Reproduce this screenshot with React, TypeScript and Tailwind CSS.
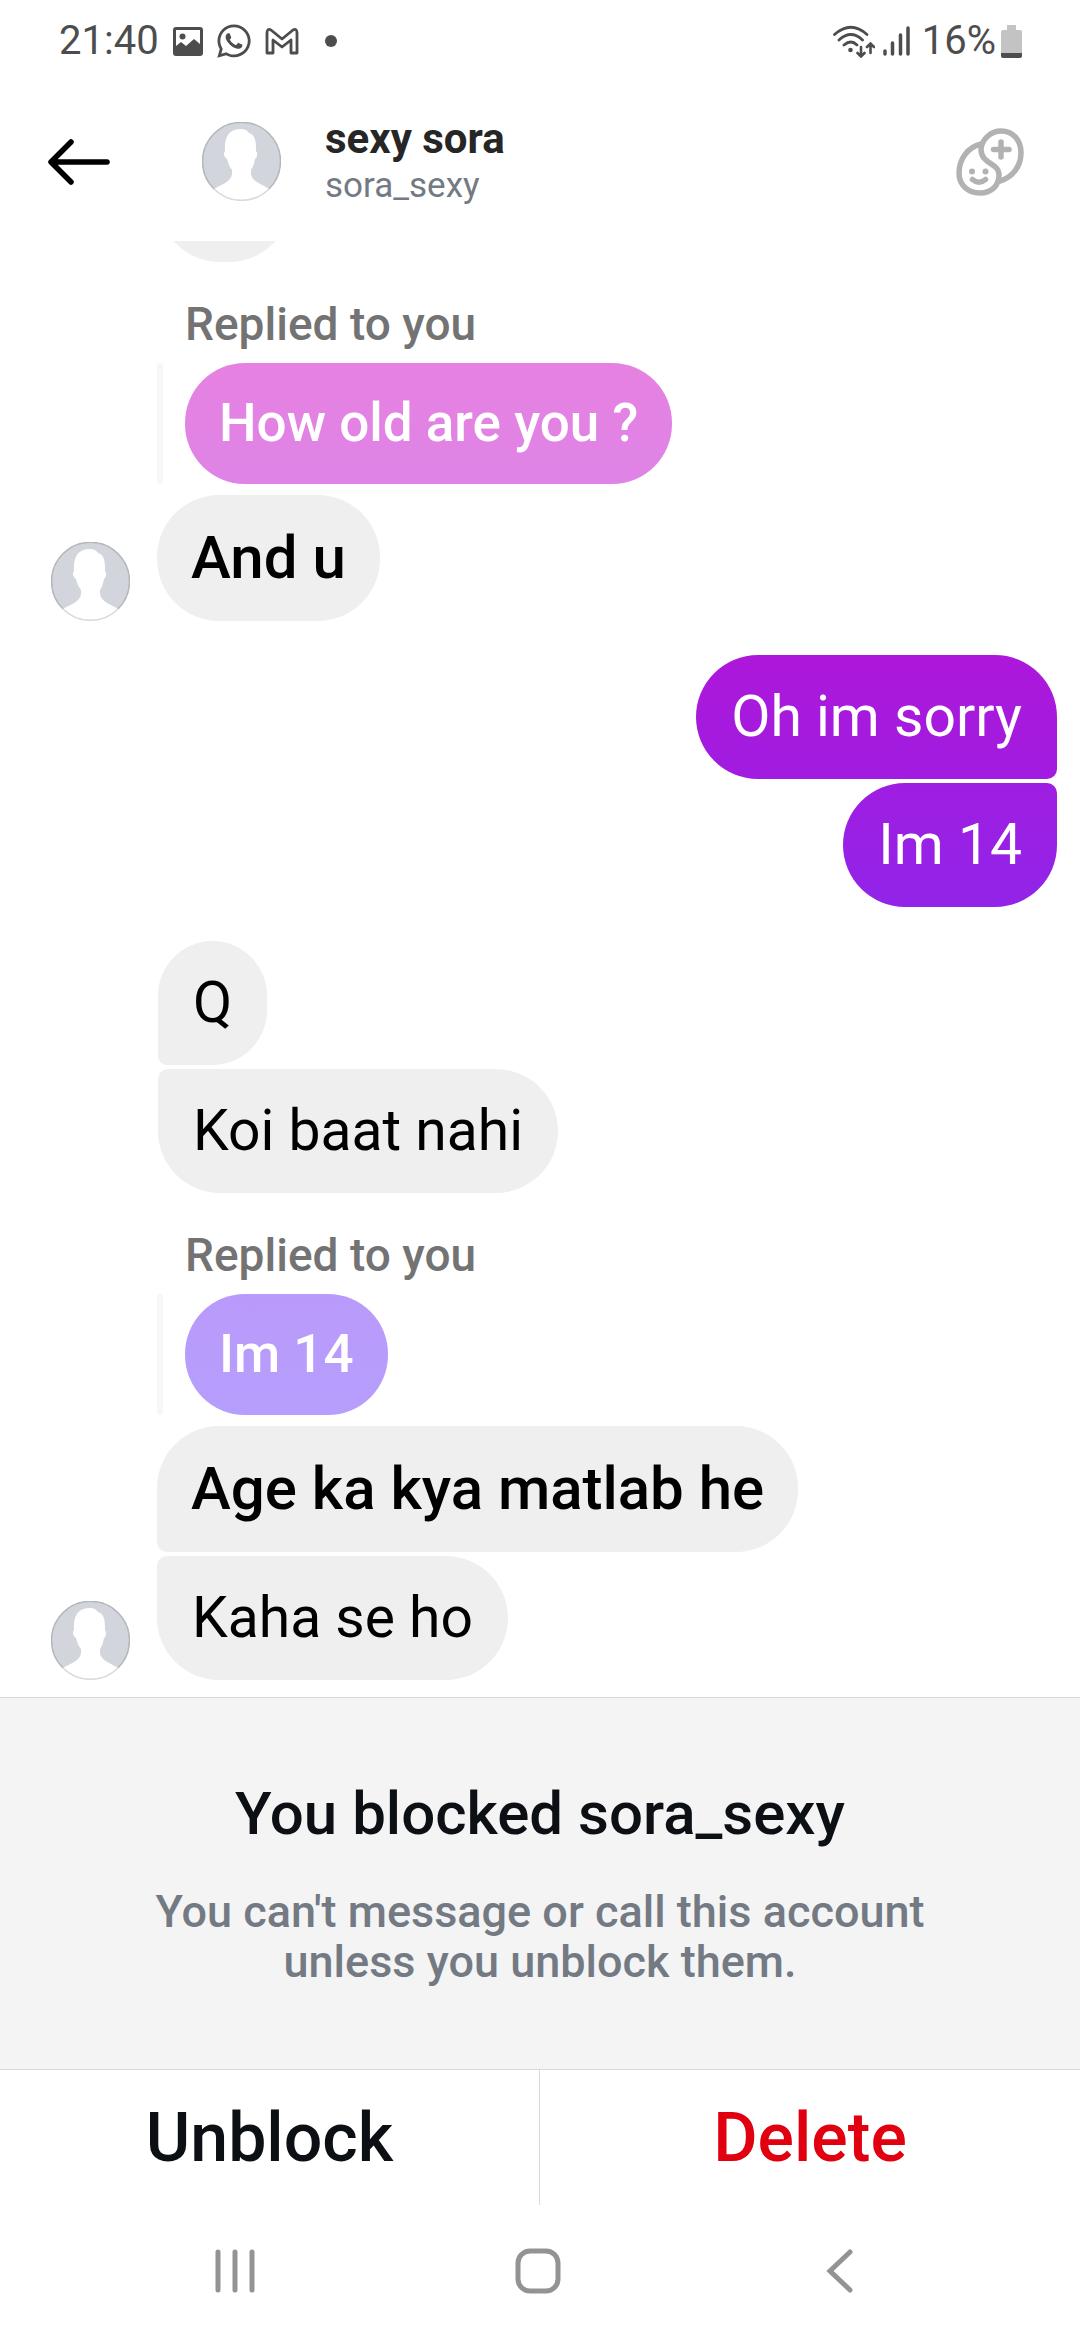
import React from "react";
import { FaWhatsapp } from "react-icons/fa";

type MessageProps = {
  children: React.ReactNode;
  className?: string;
};

const Avatar: React.FC = () => (
  <svg viewBox="0 0 79 79" className="size-[79px] shrink-0" aria-hidden="true">
    <defs>
      <clipPath id="avatar-clip">
        <circle cx="39.5" cy="39.5" r="39" />
      </clipPath>
    </defs>
    <g clipPath="url(#avatar-clip)">
      <rect width="79" height="79" fill="#d2d5dc" />
      <path
        d="M-2 79 L12 67 C20 62 29 60 30 52 L30 48 C27 44 26 41 25 37 C22 35 21 31 23 29 C22 15 27 7 39 7 C43 7 46 9 47 11 C54 13 54 21 54 29 C56 31 55 36 53 37 C52 42 51 45 49 48 L49 52 C50 60 60 62 67 67 L81 79 Z"
        fill="#fff"
      />
    </g>
    <path d="M12 67 A39 39 0 1 1 67 67" fill="none" stroke="#b3b6ba" strokeWidth="1.5" />
    <path d="M12 67 A39 39 0 0 0 67 67" fill="none" stroke="#dadada" strokeWidth="1.5" />
  </svg>
);

const ReplyLabel: React.FC = () => (
  <p className="mt-9 mb-3 pl-[185px] text-[46px] leading-[53px] font-medium text-[#737373]">
    Replied to you
  </p>
);

const Quoted: React.FC<MessageProps> = ({ children, className }) => (
  <div className="mb-[11px] flex gap-[22px] pl-[157px]">
    <span className="w-[6px] rounded-full bg-[#f5f7f9]" />
    <p
      className={`rounded-[60px] bg-linear-to-b px-[34px] py-[30px] text-[53px] leading-[61px] font-medium text-white ${className}`}
    >
      {children}
    </p>
  </div>
);

const Reply: React.FC<MessageProps> = ({ children, className }) => (
  <p
    className={`w-fit bg-[#efefef] px-[34px] py-[30px] text-[60px] leading-[66px] font-medium text-black ${className}`}
  >
    {children}
  </p>
);

const Received: React.FC<MessageProps> = ({ children, className }) => (
  <p
    className={`w-fit bg-[#efefef] px-[35px] py-[30px] text-[57px] leading-[64px] text-black ${className}`}
  >
    {children}
  </p>
);

const Sent: React.FC<MessageProps> = ({ children, className }) => (
  <p
    className={`w-fit bg-linear-to-b px-[35px] py-[30px] text-[57px] leading-[64px] text-white ${className}`}
  >
    {children}
  </p>
);

const StatusBar: React.FC = () => (
  <div className="flex h-[82px] items-center justify-between pr-[58px] pl-[59px] text-[#4d4d4d]">
    <div className="flex items-center">
      <span className="text-[40px] leading-[48px]">21:40</span>
      <svg viewBox="0 0 30 29" className="ml-[14px] h-[29px] w-[30px]">
        <path
          fillRule="evenodd"
          d="M3 0H27Q30 0 30 3V26Q30 29 27 29H3Q0 29 0 26V3Q0 0 3 0ZM3 3V19L8 15L13 19L21 12L27 17V3Z"
          fill="currentColor"
        />
        <circle cx="9.500" cy="9.500" r="3" fill="currentColor" />
      </svg>
      <FaWhatsapp className="ml-3 size-[38px]" />
      <svg viewBox="0 0 34 27" className="ml-3 h-[27px] w-[34px]" fill="none">
        <path
          d="M2 25V5Q2 0 6 2L17 11L28 2Q32 0 32 5V25H26V12L17 19L8 12V25Z"
          stroke="currentColor"
          strokeWidth="2.800"
          strokeLinejoin="round"
        />
      </svg>
      <span className="ml-[26px] size-3 rounded-full bg-[#4d4d4d]" />
    </div>
    <div className="flex items-center">
      <svg viewBox="0 0 42 33" className="h-[33px] w-[42px]" fill="none" stroke="currentColor" strokeLinecap="round">
        <path d="M1.500 9.500Q18 -5 34 9.500M6 15Q18 4 29.500 15M11 20Q18 14 24 20" strokeWidth="2.800" />
        <circle cx="17.500" cy="25" r="2.300" fill="currentColor" stroke="none" />
        <path d="M28 22V31M24.500 28L28 31.500L31.500 28M37.500 28V19M34 22L37.500 18.500L41 22" strokeWidth="2.600" />
      </svg>
      <svg viewBox="0 0 27 30" className="ml-2 h-[30px] w-[27px]" stroke="currentColor" strokeWidth="3.5" strokeLinecap="round">
        <path d="M2 25V28M9.500 17V28M17.500 9V28M25 2V28" />
      </svg>
      <span className="ml-3 text-[40px] leading-[48px]">16%</span>
      <svg viewBox="0 0 21 33" className="ml-[5px] h-[33px] w-[21px]">
        <path d="M6 0H15V5H19Q21 5 21 7V28H0V7Q0 5 2 5H6Z" fill="#c3c3c3" />
        <path d="M0 28H21V31Q21 33 19 33H2Q0 33 0 31Z" fill="#4d4d4d" />
      </svg>
    </div>
  </div>
);

const Header: React.FC = () => (
  <header className="flex h-[159px] items-center pr-[56px] pl-[47px]">
    <button type="button" aria-label="Back" className="flex h-[79px] w-[155px] items-center">
      <svg viewBox="0 0 64 48" className="h-12 w-16" fill="none" stroke="#000" strokeWidth="5.500" strokeLinecap="round">
        <path d="M24 4L4 24L24 44M5 24H60" strokeLinejoin="round" />
      </svg>
    </button>
    <Avatar />
    <div className="ml-11 flex-1">
      <h1 className="text-[42px] leading-[48px] font-bold text-[#262626]">sexy sora</h1>
      <p className="text-[35px] leading-[46px] text-[#737a83]">sora_sexy</p>
    </div>
    <button type="button" aria-label="Chat theme">
      <svg viewBox="0 0 68 68" className="size-[68px]" fill="none" stroke="#b2b2b2" strokeWidth="5.500" strokeLinecap="round">
        <path d="M25 16C12 19 3 31 3 45C3 57 12 65 24 65C36 65 43 57 43 47C43 34 25 37 25 21C26 11 35 3 45 3C57 3 65 12 65 25C65 38 57 49 44 53" strokeLinejoin="round" />
        <path d="M45 14V29M37.500 21.500H53" />
        <path d="M16.500 51.500Q23 57 29.500 51.500" />
        <circle cx="16" cy="43.500" r="3" fill="#b2b2b2" stroke="none" />
        <circle cx="29.500" cy="43.500" r="3" fill="#b2b2b2" stroke="none" />
      </svg>
    </button>
  </header>
);

const NavBar: React.FC = () => (
  <nav className="flex h-[135px] items-center justify-between pr-[216px] pb-1 pl-[211px] text-[#939393]">
    <button type="button" aria-label="Recent apps">
      <svg viewBox="0 0 48 48" className="size-12" stroke="currentColor" strokeWidth="5" strokeLinecap="round">
        <path d="M7 5V43M24 5V43M41 5V43" />
      </svg>
    </button>
    <button type="button" aria-label="Home">
      <svg viewBox="0 0 48 48" className="size-12" fill="none" stroke="currentColor" strokeWidth="5">
        <rect x="4" y="4" width="40" height="40" rx="12" />
      </svg>
    </button>
    <button type="button" aria-label="Go back">
      <svg viewBox="0 0 48 48" className="size-12" fill="none" stroke="currentColor" strokeWidth="5" strokeLinecap="round">
        <path d="M34 5L14 24L34 43" />
      </svg>
    </button>
  </nav>
);

const App: React.FC = () => {
  return (
    <div className="w-full bg-white font-['Roboto','Liberation_Sans',sans-serif]">
      <StatusBar />
      <Header />

      <main className="pb-[17px]">
        {/* tail of an earlier message, cut off by the header */}
        <div className="flex h-[21px] items-end overflow-hidden pl-[158px]">
          <span className="h-[124px] w-[133px] shrink-0 rounded-[62px] bg-[#efefef]" />
        </div>

        <ReplyLabel />
        <Quoted className="from-[#e681e1] to-[#de84e6]">How old are you ?</Quoted>
        <div className="flex items-end gap-[27px] pl-[51px]">
          <Avatar />
          <Reply className="rounded-[62px]">And u</Reply>
        </div>

        <div className="mt-[34px] flex flex-col items-end gap-1 pr-[23px]">
          <Sent className="rounded-[62px] rounded-br-[10px] from-[#ad17da] to-[#a01ce0]">
            Oh im sorry
          </Sent>
          <Sent className="rounded-[62px] rounded-tr-[10px] from-[#9f1de1] to-[#9124e8]">
            Im 14
          </Sent>
        </div>

        <div className="mt-[34px] flex flex-col gap-1 pl-[158px]">
          <Received className="rounded-[62px] rounded-bl-[10px]">Q</Received>
          <Received className="rounded-[62px] rounded-tl-[10px]">Koi baat nahi</Received>
        </div>

        <ReplyLabel />
        <Quoted className="from-[#b99afb] to-[#b69efd]">Im 14</Quoted>
        <div className="flex items-end gap-[27px] pl-[51px]">
          <Avatar />
          <div className="flex flex-col gap-1">
            <Reply className="rounded-[62px] rounded-bl-[10px]">Age ka kya matlab he</Reply>
            <Received className="rounded-[62px] rounded-tl-[10px]">Kaha se ho</Received>
          </div>
        </div>
      </main>

      <section className="border-y border-[#d9dadb] bg-[#f4f4f4] pt-[83px] pb-[82px] text-center font-medium">
        <h2 className="text-[60px] leading-[66px] text-[#0c1014]">You blocked sora_sexy</h2>
        <p className="mx-auto mt-10 max-w-[800px] text-[45px] leading-[50px] text-[#737a83]">
          You can't message or call this account unless you unblock them.
        </p>
      </section>

      <div className="grid h-[135px] grid-cols-2 text-[68px] font-medium">
        <button type="button" className="border-r border-[#d9dadb] text-[#0c1014]">
          Unblock
        </button>
        <button type="button" className="text-[#e1000f]">
          Delete
        </button>
      </div>

      <NavBar />
    </div>
  );
};

export default App;
